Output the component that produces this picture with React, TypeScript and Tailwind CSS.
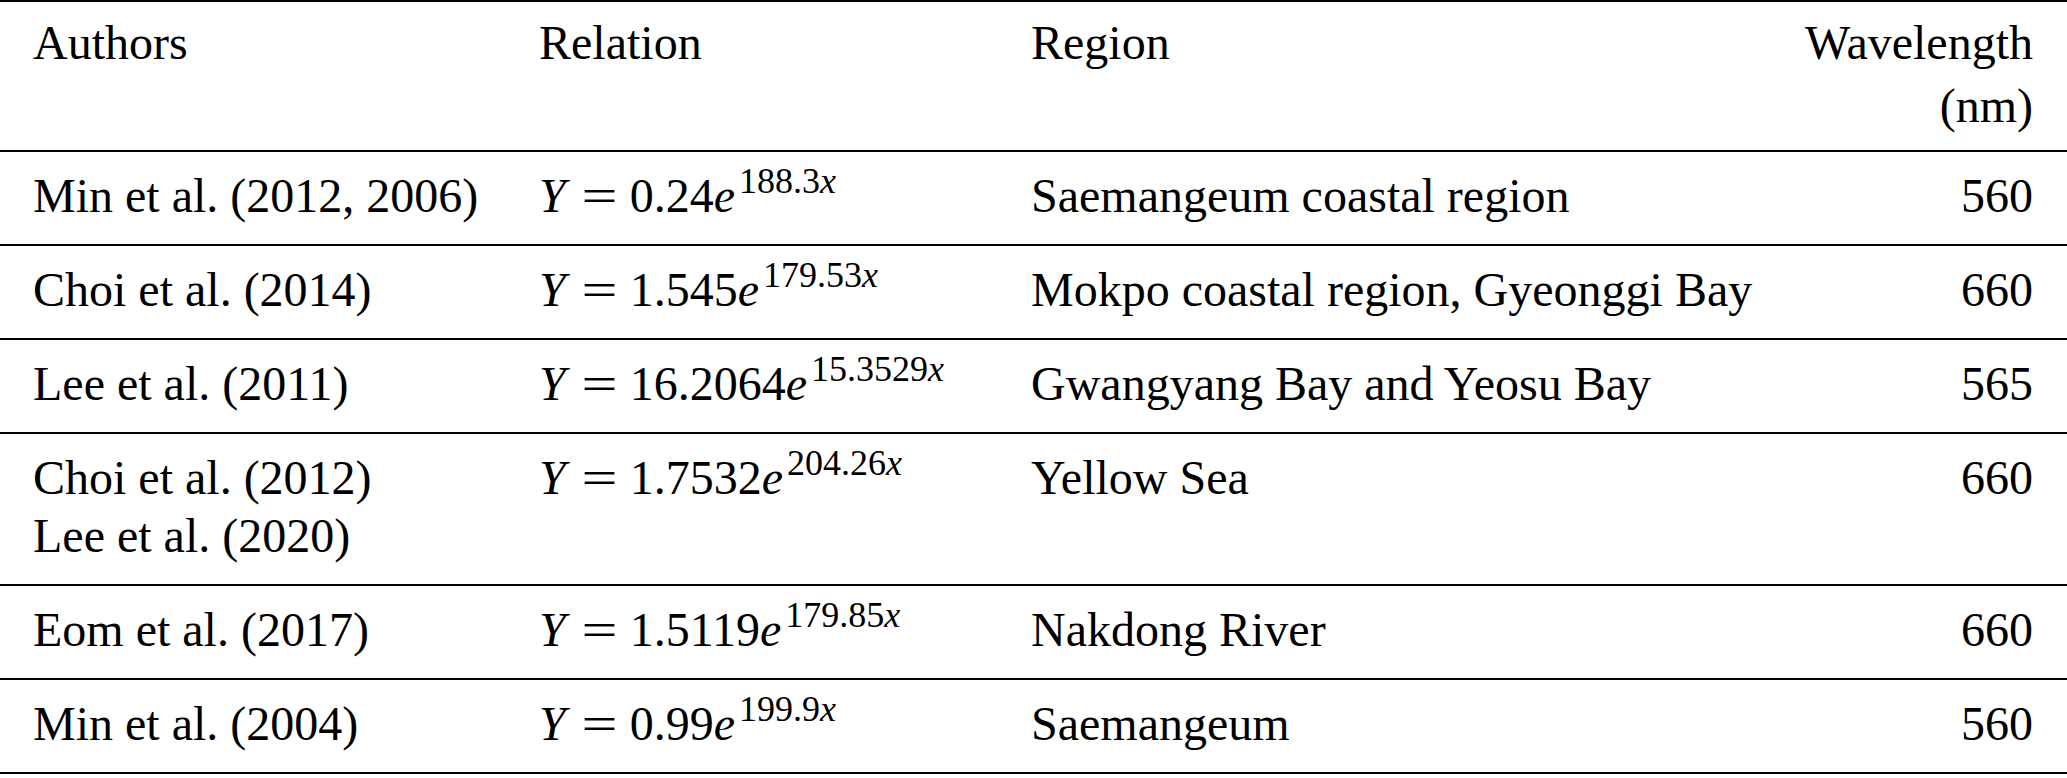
import React from "react";

type Relation = {
  coef: string;
  exp: string;
};

type Row = {
  authors: string[];
  relation: Relation;
  region: string;
  wavelength: number;
};

const rows: Row[] = [
  {
    authors: ["Min et al. (2012, 2006)"],
    relation: { coef: "0.24", exp: "188.3" },
    region: "Saemangeum coastal region",
    wavelength: 560,
  },
  {
    authors: ["Choi et al. (2014)"],
    relation: { coef: "1.545", exp: "179.53" },
    region: "Mokpo coastal region, Gyeonggi Bay",
    wavelength: 660,
  },
  {
    authors: ["Lee et al. (2011)"],
    relation: { coef: "16.2064", exp: "15.3529" },
    region: "Gwangyang Bay and Yeosu Bay",
    wavelength: 565,
  },
  {
    authors: ["Choi et al. (2012)", "Lee et al. (2020)"],
    relation: { coef: "1.7532", exp: "204.26" },
    region: "Yellow Sea",
    wavelength: 660,
  },
  {
    authors: ["Eom et al. (2017)"],
    relation: { coef: "1.5119", exp: "179.85" },
    region: "Nakdong River",
    wavelength: 660,
  },
  {
    authors: ["Min et al. (2004)"],
    relation: { coef: "0.99", exp: "199.9" },
    region: "Saemangeum",
    wavelength: 560,
  },
];

const gridCols = "grid grid-cols-[506px_492px_1fr_auto] pl-[33px] pr-[34px]";

const Formula: React.FC<{ relation: Relation }> = ({ relation }) => (
  <span className="whitespace-nowrap">
    <span className="italic">Y</span>
    <span className="inline-block ml-[20px] mr-[17px] scale-x-133">=</span>
    <span>{relation.coef}</span>
    <span className="italic">e</span>
    <span className="relative -top-[19px] ml-[4px] text-[36px] leading-none">
      {relation.exp}
      <span className="italic">x</span>
    </span>
  </span>
);

export default function App() {
  return (
    <div className="w-[2067px] h-[778px] bg-white text-black font-['Liberation_Serif',serif] text-[48px]">
      <div className="border-t-2 border-black">
        <div className={`${gridCols} pt-[9px] pb-[13px] leading-[63px] border-b-2 border-black`}>
          <div>Authors</div>
          <div>Relation</div>
          <div>Region</div>
          <div className="text-right">
            <div>Wavelength</div>
            <div>(nm)</div>
          </div>
        </div>

        {rows.map((row, i) => (
          <div
            key={i}
            className={`${gridCols} pt-[15px] pb-[19px] leading-[58px] border-b-2 border-black`}
          >
            <div>
              {row.authors.map((a) => (
                <div key={a}>{a}</div>
              ))}
            </div>
            <div>
              <Formula relation={row.relation} />
            </div>
            <div>{row.region}</div>
            <div className="text-right">{row.wavelength}</div>
          </div>
        ))}
      </div>
    </div>
  );
}
